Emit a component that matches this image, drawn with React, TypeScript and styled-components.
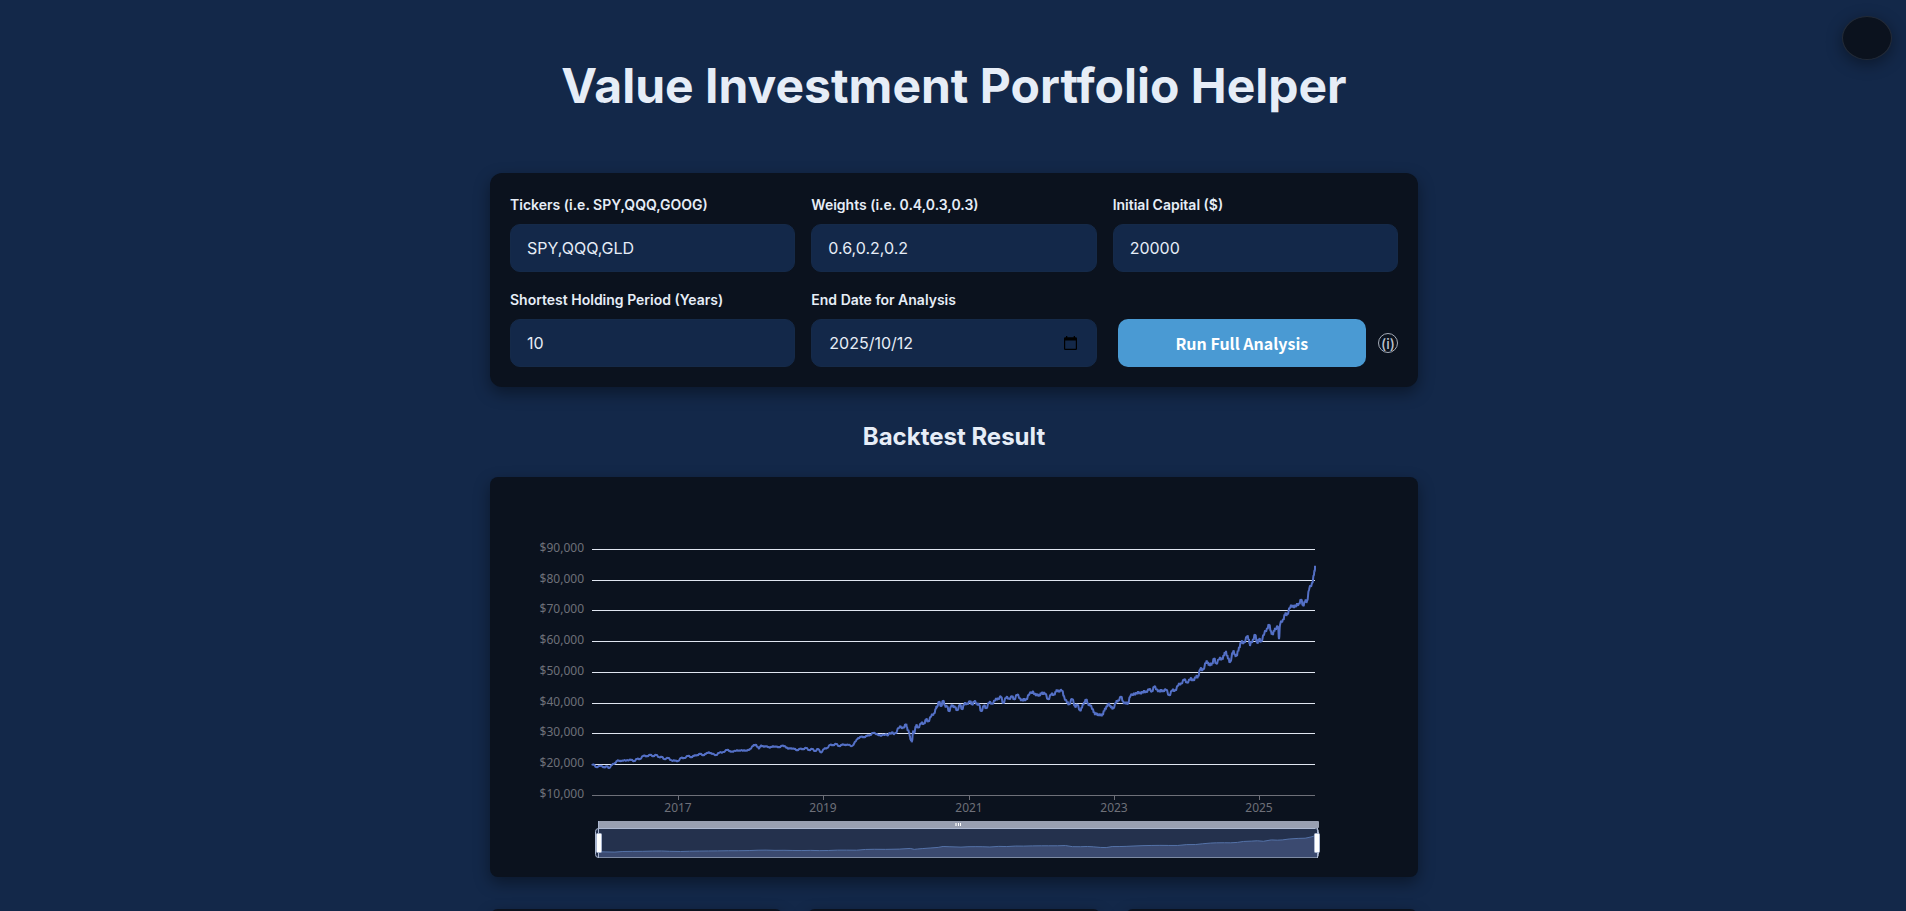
import React, { useState } from 'react';
import styled, { createGlobalStyle } from 'styled-components';

const GlobalStyle = createGlobalStyle`
  * { box-sizing: border-box; }
  html { scrollbar-width: none; }
  body {
    margin: 0;
    background: #132849;
    color: #e6edf7;
    font-family: Inter, 'Noto Sans CJK SC', sans-serif;
  }
`;

const Page = styled.main`
  width: 100%;
  max-width: 962px;
  margin: 0 auto;
  padding: 57px 16px 32px 18px;
`;

const Title = styled.h1`
  margin: 0 0 58px;
  text-align: center;
  font-size: 48px;
  font-weight: 700;
  line-height: 58px;
`;

const SectionTitle = styled.h2`
  margin: 33px 0 23px;
  text-align: center;
  font-size: 24px;
  font-weight: 700;
  line-height: 34px;
`;

const Card = styled.section`
  background: #0b121e;
  box-shadow: 0 6px 16px rgba(0, 0, 0, 0.4);
`;

const FormCard = styled(Card)`
  padding: 20px;
  border-radius: 12px;
`;

const FormGrid = styled.form`
  display: grid;
  grid-template-columns: repeat(3, 1fr);
  gap: 16px;
`;

const Field = styled.div`
  display: flex;
  flex-direction: column;
  gap: 8px;
  min-width: 0;
`;

const Label = styled.label`
  font-size: 14px;
  font-weight: 600;
  line-height: 23px;
`;

const Input = styled.input`
  width: 100%;
  height: 48px;
  padding: 0 16px;
  border: 1px solid #152a49;
  border-radius: 10px;
  background: #132849;
  color: #e6edf7;
  font: 400 16px Inter, sans-serif;
`;

const DateBox = styled.div`
  display: flex;
  align-items: center;
  height: 48px;
  padding-right: 19px;
  border: 1px solid #152a49;
  border-radius: 10px;
  background: #132849;
`;

const DateInput = styled(Input)`
  flex: 1;
  min-width: 0;
  height: 46px;
  padding: 0 17px;
  border: 0;
  background: none;
`;

const PickerButton = styled.button`
  display: flex;
  padding: 0;
  border: 0;
  background: none;
  color: #000;
`;

const Actions = styled.div`
  display: flex;
  align-items: center;
  align-self: end;
  gap: 12px;
  padding-left: 5px;
`;

const RunButton = styled.button`
  flex: 1;
  height: 48px;
  padding: 0;
  border: 0;
  border-radius: 10px;
  background: #4a9ad3;
  color: #fff;
  font: 700 16px 'Noto Sans CJK SC', sans-serif;
`;

const InfoButton = styled.button`
  display: flex;
  align-items: center;
  justify-content: center;
  width: 20px;
  height: 20px;
  padding: 0;
  border: 1px solid #a5acb8;
  border-radius: 50%;
  background: none;
  color: #bcc3ce;
  font: 500 14px Inter, sans-serif;
`;

const ChartCard = styled(Card)`
  border-radius: 8px;
`;

const Chart = styled.svg`
  display: block;
  width: 100%;
  height: auto;
  font-family: 'Noto Sans', sans-serif;
  font-size: 12px;
`;

const MetricRow = styled.div`
  display: grid;
  grid-template-columns: repeat(3, 1fr);
  gap: 24px;
  margin-top: 32px;
`;

const MetricCard = styled(Card)`
  height: 120px;
  border-radius: 8px;
`;

const ThemeToggle = styled.button`
  position: fixed;
  top: 16px;
  right: 14px;
  width: 50px;
  height: 44px;
  padding: 0;
  border: 1px solid #232b38;
  border-radius: 50%;
  background: #0b121e;
  box-shadow: 0 4px 16px rgba(0, 0, 0, 0.4);
`;

const GRID = [
  { y: 72, label: '$90,000' },
  { y: 103, label: '$80,000' },
  { y: 133, label: '$70,000' },
  { y: 164, label: '$60,000' },
  { y: 195, label: '$50,000' },
  { y: 226, label: '$40,000' },
  { y: 256, label: '$30,000' },
  { y: 287, label: '$20,000' },
  { y: 318, label: '$10,000' },
];

const YEARS = [
  { x: 188, label: '2017' },
  { x: 333, label: '2019' },
  { x: 479, label: '2021' },
  { x: 624, label: '2023' },
  { x: 769, label: '2025' },
];

// Portfolio value, as chart coordinates: x, y pairs.
const VALUES: number[][] = [
  [102, 287], [104, 288], [106, 290], [110, 289], [114, 290], [117, 289.5], [119, 291], [122, 288], [125, 286], [127, 284], [130, 283.5],
  [133, 284], [137, 283], [141, 283], [144, 284], [147, 282], [150, 282], [153, 279], [157, 279], [160, 278], [163, 279], [166, 278], [169, 280],
  [172, 280], [174, 282], [178, 281], [181, 283], [185, 284], [188, 284], [191, 281], [194, 281], [198, 279], [201, 280], [204, 279], [207, 278],
  [210, 277], [213, 278], [216, 277], [219, 275], [222, 277], [226, 278], [229, 276], [233, 275], [237, 273], [240, 274], [243, 275], [247, 273],
  [250, 274], [254, 273], [257, 274], [260, 272], [263, 269], [266, 267.5], [269, 272], [271, 268], [274, 270], [277, 269], [280, 271], [283, 269],
  [286, 270], [289, 270], [292, 269], [295, 269], [298, 272], [301, 271], [304, 272], [307, 273], [310, 272], [313, 272], [316, 271], [319, 273],
  [322, 272], [325, 274], [328, 272], [331, 275.5], [334, 272], [337, 271], [340, 268], [343, 268], [346, 267], [349, 269], [352, 268], [355, 267.5],
  [358, 268], [362, 269], [366, 264], [368, 261], [371, 260], [374, 260], [377, 259], [380, 258], [383, 256], [387, 257], [391, 259], [396, 257],
  [401, 257], [405, 256], [409, 251], [413, 250], [416, 248], [417, 250], [419, 256], [420, 259], [421, 264], [422, 264], [423, 255], [424, 256], [426, 249],
  [428, 250], [431, 247], [434, 246], [436, 243], [438, 244], [441, 240], [444, 236], [446, 232], [447, 229], [449, 225], [451, 229], [453, 224],
  [455, 228], [457, 230], [459, 234], [461, 230], [463, 228], [465, 231], [467, 233], [470, 228], [472, 232], [474, 228], [477, 226], [480, 225],
  [482, 227], [484, 225], [487, 226], [489, 228], [491, 234], [494, 229], [496, 231], [499, 226], [502, 226], [505, 224], [508, 221], [511, 220],
  [513, 226], [516, 221], [519, 221], [522, 220], [524, 222], [527, 218], [530, 221], [533, 224], [536, 222], [539, 218], [543, 214], [546, 219],
  [548, 217], [550, 219], [552, 215], [555, 217], [558, 222], [561, 218], [564, 217], [566, 215], [568, 213], [572, 214], [574, 219], [577, 226],
  [579, 227], [582, 222], [585, 229], [587, 228], [590, 233], [592, 231], [594, 225], [596, 223], [598, 226], [600, 229], [603, 232], [605, 238], [607, 236],
  [609, 239], [611, 237], [613, 238], [615, 231], [617, 230], [619, 226], [621, 231], [623, 231], [626, 226], [628, 223], [631, 220], [633, 224],
  [636, 227], [638, 226], [640, 220], [644, 216], [647, 217], [650, 215], [653, 216], [656, 214], [659, 213], [662, 214], [664, 210], [667, 212],
  [670, 215], [673, 213], [676, 213], [679, 218], [682, 214], [685, 213], [688, 209], [691, 206], [694, 203], [697, 205], [700, 203], [703, 202],
  [706, 201], [708, 199], [710, 193], [713, 192], [716, 186], [718, 185], [720, 189], [722, 186], [724, 182], [726, 186], [729, 183], [732, 181],
  [734, 179], [736, 174], [738, 182], [740, 185], [743, 175], [745, 177], [747, 179], [749, 170], [751, 166], [754, 165], [757, 160], [759, 162],
  [760, 169], [763, 162], [765, 158], [767, 165], [769, 163], [771, 164], [774, 158], [777, 151], [779, 148], [781, 154], [783, 158], [785, 151],
  [788, 150], [789, 162], [790, 148], [793, 142], [795, 138], [797, 137], [800, 131], [803, 128], [806, 130], [809, 126], [811, 123], [813, 128],
  [815, 125], [817, 124], [819, 113], [822, 106], [824, 98], [825, 91], [825, 90],
];

const linePath = 'M' + VALUES.map(([x, y], i) => {
  if (i === 0) return `${x} ${y}`;
  const [px, py] = VALUES[i - 1];
  const swing = x > 700 ? 2.2 : x > 400 ? 1.8 : 0.7;
  const sign = i % 2 ? 1 : -1;
  const a = `${px + (x - px) * 0.35} ${py + (y - py) * 0.35 + sign * swing}`;
  const b = `${px + (x - px) * 0.7} ${py + (y - py) * 0.7 - sign * swing * 0.7}`;
  return `${a}L${b}L${x} ${y}`;
}).join('L');

const overviewPoints = VALUES.filter((_, i) => i % 3 === 0)
  .map(([x, y]) => `${108 + (x - 102) * 0.9945},${358 + (y - 90) * 0.085}`)
  .join(' ');

const GrowthChart = () => (
  <Chart viewBox="0 0 928 400" role="img" aria-label="Portfolio value over time">
    {GRID.map(({ y, label }) => (
      <g key={label}>
        <rect x="102" y={y} width="723" height="1" fill={y === 318 ? '#6e7079' : '#e0e6f1'} />
        <text x="94" y={y + 3} textAnchor="end" fill="#6e7079">{label}</text>
      </g>
    ))}
    {YEARS.map(({ x, label }) => (
      <g key={label}>
        <rect x={x} y="318" width="1" height="5" fill="#6e7079" />
        <text x={x} y="335" textAnchor="middle" fill="#6e7079">{label}</text>
      </g>
    ))}
    <path d={linePath} fill="none" stroke="#5470c6" strokeWidth="2" strokeLinejoin="bevel" />

    <rect x="108" y="344" width="721" height="7" rx="1" fill="#989fb1" />
    <rect x="105.5" y="351.5" width="723" height="29" rx="3" fill="#24314d" stroke="#acb8d1" />
    <polygon points={`108,380 ${overviewPoints} 828,380`} fill="#3b4a70" />
    <polyline points={overviewPoints} fill="none" stroke="#5472a8" strokeWidth="1" />
    <rect x="108" y="380" width="719" height="1" fill="#7d8aa3" />
    <rect x="465" y="346" width="2" height="3" fill="#d5d8df" />
    <rect x="468" y="346" width="1" height="3" fill="#fff" />
    <rect x="470" y="346" width="1" height="3" fill="#fff" />
    <path d="M108.5 344V381M827.5 351V381" stroke="#acb8d1" />
    <rect x="106.5" y="356.5" width="5" height="19" rx="1" fill="#fff" stroke="#acb8d1" />
    <rect x="824.5" y="356.5" width="5" height="19" rx="1" fill="#fff" stroke="#acb8d1" />
  </Chart>
);

const CalendarIcon = () => (
  <svg width="13" height="14" viewBox="0 0 13 14" aria-hidden="true">
    <path fill="currentColor" fillRule="evenodd" d="M2 0h1.300v1.300h6.400V0H11v1.300h.7q1.300 0 1.300 1.300v10.100q0 1.300-1.300 1.300H1.300Q0 14 0 12.700V2.600Q0 1.300 1.300 1.300H2zM1.200 4.600v8.200h10.600V4.600z" />
  </svg>
);

const FIELDS = [
  { id: 'tickers', type: 'text', label: 'Tickers (i.e. SPY,QQQ,GOOG)', value: 'SPY,QQQ,GLD' },
  { id: 'weights', type: 'text', label: 'Weights (i.e. 0.4,0.3,0.3)', value: '0.6,0.2,0.2' },
  { id: 'capital', type: 'number', label: 'Initial Capital ($)', value: '20000' },
  { id: 'period', type: 'number', label: 'Shortest Holding Period (Years)', value: '10' },
];

export default function App() {
  const [endDate, setEndDate] = useState('2025/10/12');
  return (
    <>
      <GlobalStyle />
      <ThemeToggle type="button" aria-label="Toggle theme" />
      <Page>
        <Title>Value Investment Portfolio Helper</Title>
        <FormCard>
          <FormGrid onSubmit={(e) => e.preventDefault()}>
            {FIELDS.map((f) => (
              <Field key={f.id}>
                <Label htmlFor={f.id}>{f.label}</Label>
                <Input id={f.id} type={f.type} defaultValue={f.value} />
              </Field>
            ))}
            <Field>
              <Label htmlFor="end-date">End Date for Analysis</Label>
              <DateBox>
                <DateInput id="end-date" value={endDate} onChange={(e) => setEndDate(e.target.value)} />
                <PickerButton type="button" aria-label="Open calendar"><CalendarIcon /></PickerButton>
              </DateBox>
            </Field>
            <Actions>
              <RunButton type="submit">Run Full Analysis</RunButton>
              <InfoButton type="button" aria-label="About the analysis">(i)</InfoButton>
            </Actions>
          </FormGrid>
        </FormCard>
        <SectionTitle>Backtest Result</SectionTitle>
        <ChartCard>
          <GrowthChart />
        </ChartCard>
        <MetricRow>
          <MetricCard />
          <MetricCard />
          <MetricCard />
        </MetricRow>
      </Page>
    </>
  );
}
